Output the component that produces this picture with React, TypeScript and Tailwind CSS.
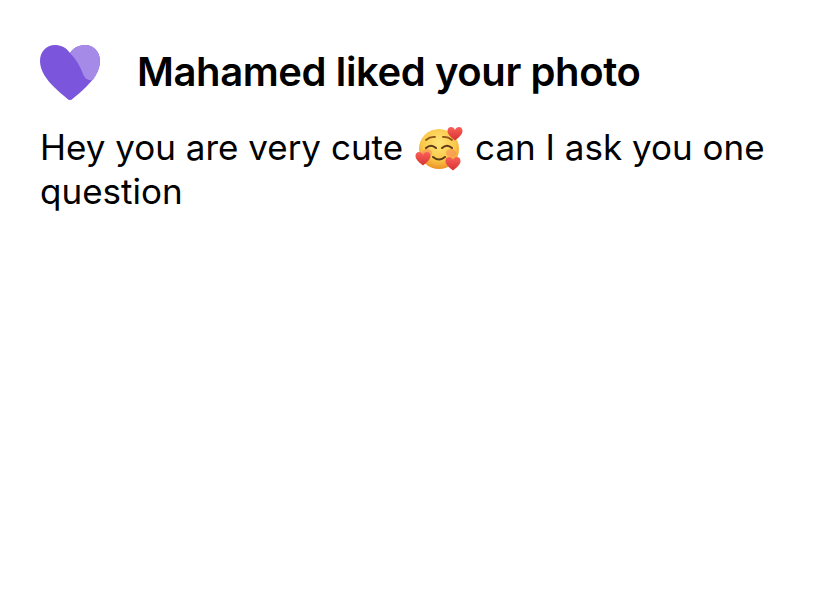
const smallHeart = "M0 -3C-2 -7.500 -7.500 -6.500 -7.500 -2C-7.500 2 -3 5 0 7.500C3 5 7.500 2 7.500 -2C7.500 -6.500 2 -7.500 0 -3z";

const Emoji = () => (
  <svg viewBox="0 0 48 46" className="inline-block w-[48px] h-[46px] align-middle ml-[12px] mr-[12px] -my-[10px] -translate-y-[2px]">
    <defs>
      <radialGradient id="face" cx="50%" cy="35%" r="65%">
        <stop offset="0%" stopColor="#ffe476" />
        <stop offset="65%" stopColor="#fbc84a" />
        <stop offset="100%" stopColor="#ec9228" />
      </radialGradient>
      <linearGradient id="small" x1="0" y1="0" x2="0" y2="1">
        <stop offset="0%" stopColor="#f8605a" />
        <stop offset="100%" stopColor="#d9322f" />
      </linearGradient>
    </defs>
    <circle cx="24" cy="24" r="20" fill="url(#face)" />
    <ellipse cx="12" cy="28" rx="5" ry="4" fill="#f5855a" opacity="0.55" />
    <ellipse cx="36" cy="28" rx="5" ry="4" fill="#f5855a" opacity="0.55" />
    <path d="M11 23q5-4.500 10 0M27 23q5-4.500 10 0" fill="none" stroke="#5c3a1a" strokeWidth="2" strokeLinecap="round" />
    <path d="M11 15q4-3.500 9-3M28 12q5-.5 9 3" fill="none" stroke="#8a5418" strokeWidth="1.800" strokeLinecap="round" />
    <path d="M18 32q6 5 12 0" fill="none" stroke="#5c3a1a" strokeWidth="2" strokeLinecap="round" />
    <path d={smallHeart} transform="translate(40 8)" fill="url(#small)" />
    <path d={smallHeart} transform="translate(8 33)" fill="url(#small)" />
    <path d={smallHeart} transform="translate(38 38)" fill="url(#small)" />
  </svg>
);

const HeartLogo = () => (
  <svg viewBox="0 0 60 56" className="w-[60px] h-[56px] shrink-0">
    <path
      d="M30 8C26 2 20 0 15 0 6 0 0 7 0 16c0 10 7 19 14 26 5 5 10 9 13 11.500 2 2 4 2 6 0 3-2.500 8-6.500 13-11.500C53 35 60 26 60 16 60 7 54 0 45 0c-5 0-11 2-15 8z"
      fill="#7b55dc"
    />
    <path
      d="M30 8c4-6 10-8 15-8 9 0 15 7 15 16 0 7-3 13-7 19-5 1-8-1-10-6-3-8-7-15-13-21z"
      fill="#a68ae8"
    />
  </svg>
);

export default function App() {
  return (
    <div className="w-[818px] h-[593px] bg-white px-[40px] pt-[45px] text-black overflow-hidden" style={{ fontFamily: '"Inter", "Liberation Sans", sans-serif' }}>
      <div className="flex items-start gap-[37px]">
        <HeartLogo />
        <h1 className="mt-[1px] text-[40px] leading-[52px] font-semibold tracking-[-0.4px]">Mahamed liked your photo</h1>
      </div>
      <p className="mt-[24px] text-[35px] leading-[44px]">
        Hey you are very cute<Emoji />can I ask you one question
      </p>
    </div>
  );
}
